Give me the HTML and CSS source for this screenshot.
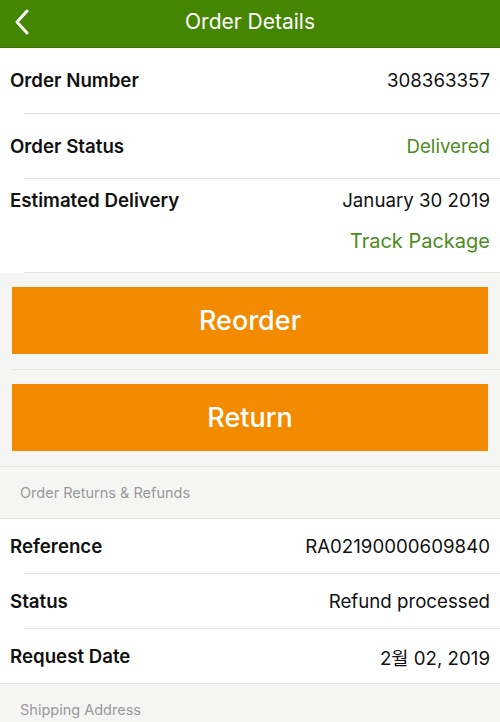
FILE: index.html
```html
<!DOCTYPE html>
<html lang="en">
<head>
    <meta charset="UTF-8">
    <meta name="viewport" content="width=device-width, initial-scale=1.0">
    <title>Order Details</title>
    <link rel="stylesheet" href="styles.css">
</head>
<body>

<div class="header">
    <svg class="back" width="18" height="26" viewBox="0 0 18 26">
        <path d="M15 2 L5 13 L15 24" fill="none" stroke="#ffffff" stroke-width="3" stroke-linecap="round" stroke-linejoin="round"/>
    </svg>
    <h1>Order Details</h1>
</div>

<div class="group">
    <div class="row tall">
        <span class="label">Order Number</span>
        <span class="value">308363357</span>
    </div>
    <div class="row tall second">
        <span class="label">Order Status</span>
        <span class="value green">Delivered</span>
    </div>
    <div class="row delivery">
        <div class="line">
            <span class="label">Estimated Delivery</span>
            <span class="value">January 30 2019</span>
        </div>
        <a class="track">Track Package</a>
    </div>
</div>

<div class="actions">
    <div class="action"><button>Reorder</button></div>
    <div class="action"><button>Return</button></div>
</div>

<div class="section-title">Order Returns &amp; Refunds</div>

<div class="group bordered">
    <div class="row">
        <span class="label">Reference</span>
        <span class="value">RA02190000609840</span>
    </div>
    <div class="row">
        <span class="label">Status</span>
        <span class="value">Refund processed</span>
    </div>
    <div class="row">
        <span class="label">Request Date</span>
        <span class="value">2월 02, 2019</span>
    </div>
</div>

<div class="section-title">Shipping Address</div>

</body>
</html>
```

FILE: styles.css
```css
body {
    font-family: Inter, "Noto Sans CJK KR", sans-serif;
    background-color: #f5f5f4;
    color: #111111;
    margin: 0;
}
.header {
    background-color: #448502;
    height: 47px;
    border-bottom: 1px solid #3b7300;
    display: flex;
    align-items: center;
    justify-content: center;
    position: relative;
}
.back {
    position: absolute;
    left: 12px;
    top: 9px;
}
h1 {
    color: #ffffff;
    font-size: 21px;
    font-weight: 400;
    margin: 0 0 4px;
}
.group {
    background-color: #ffffff;
    padding-left: 24px;
}
.group.bordered {
    border-bottom: 1px solid #e4e4e4;
}
.row {
    height: 54px;
    padding-right: 10px;
    display: flex;
    justify-content: space-between;
    align-items: center;
    border-bottom: 1px solid #e4e4e4;
}
.group.bordered .row:last-child {
    border-bottom: none;
}
.label {
    margin-left: -14px;
    font-size: 18.7px;
    font-weight: 600;
}
.value {
    font-size: 18.7px;
    font-weight: 400;
}
.row.tall {
    height: 65px;
}
.row.tall.second {
    height: 64px;
}
.green {
    color: #4a8c1c;
}
.row.delivery {
    height: 93px;
    flex-direction: column;
    align-items: stretch;
    justify-content: flex-start;
}
.line {
    display: flex;
    justify-content: space-between;
    margin-top: 10px;
}
.track {
    align-self: flex-end;
    color: #4a8c1c;
    font-size: 20px;
    margin-top: 17px;
}
.actions {
    padding-left: 24px;
    border-bottom: 1px solid #e4e4e4;
}
.action {
    margin-left: -12px;
    padding: 14px 12px 15px 0;
    border-bottom: 1px solid #e4e4e4;
}
.action:last-child {
    padding-top: 14px;
    border-bottom: none;
}
button {
    display: block;
    width: 100%;
    height: 67px;
    background-color: #f28b00;
    color: #ffffff;
    border: none;
    font-family: Inter, sans-serif;
    font-size: 27px;
    font-weight: 500;
}
.section-title {
    height: 51px;
    padding-left: 20px;
    display: flex;
    align-items: center;
    font-size: 14.5px;
    color: #999999;
    border-bottom: 1px solid #e4e4e4;
}
```
